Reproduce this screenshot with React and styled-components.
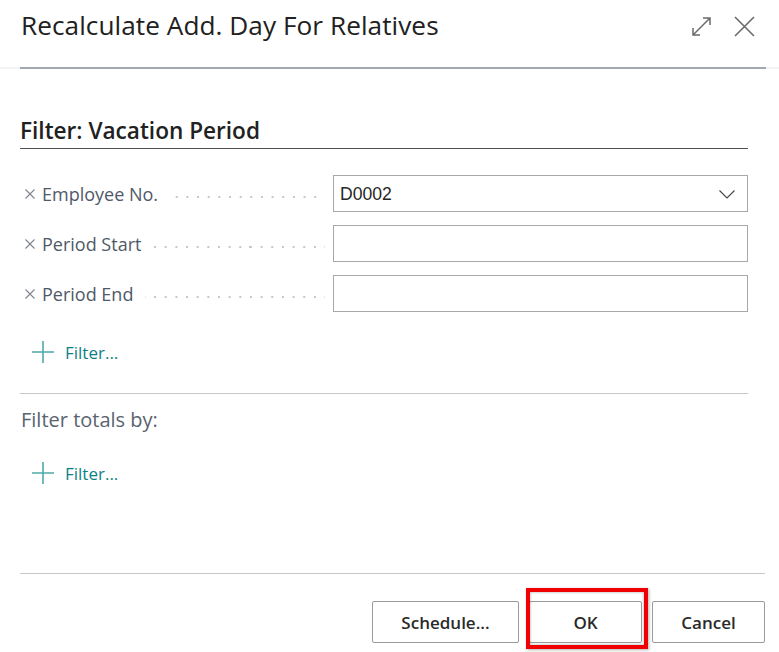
import React from "react";
import styled, { createGlobalStyle } from "styled-components";

const Global = createGlobalStyle`
  html, body { margin: 0; padding: 0; background: #fff; }
  body { font-family: "Open Sans", "Noto Sans", sans-serif; }
  * { box-sizing: border-box; }
`;

const Dialog = styled.div`
  width: 779px;
  height: 652px;
  display: flex;
  flex-direction: column;
  background: #fff;
  overflow: hidden;
`;

const Header = styled.div`
  height: 67px;
  display: flex;
  align-items: center;
  padding: 0 24px 0 21px;
`;

const Title = styled.h1`
  flex: 1;
  margin: 0;
  font-size: 26.2px;
  font-weight: 400;
  letter-spacing: 0.05px;
  color: #212121;
  line-height: 34px;
  margin-top: -17px;
`;

const HeaderIcons = styled.div`
  display: flex;
  align-items: center;
  gap: 22px;
  margin-top: -15px;
`;

const IconButton = styled.span`
  display: inline-flex;
  width: 21px;
  height: 21px;
  color: #6a6a6a;
`;

const RuleStrip = styled.div`
  height: 2px;
  background: #f3f3f4;
  padding: 0 13px 0 20px;
`;

const Rule = styled.div`
  height: 2px;
  background: #a4a8b1;
`;

const Body = styled.div`
  flex: 1;
  padding: 0 31px 0 20px;
  display: flex;
  flex-direction: column;
`;

const SectionTitle = styled.h2`
  margin: 47px 0 0;
  font-size: 22.6px;
  font-weight: 600;
  line-height: 29px;
  color: #212121;
  padding-bottom: 3px;
  border-bottom: 1px solid #505050;
`;

const Fields = styled.div`
  margin-top: 26px;
  display: flex;
  flex-direction: column;
  gap: 13px;
`;

const FieldRow = styled.div`
  display: grid;
  grid-template-columns: 313px 1fr;
  height: 37px;
`;

const Label = styled.div`
  display: flex;
  align-items: center;
  padding-left: 5px;
  padding-right: 8px;
  color: #4f5968;
  font-size: 18px;
`;

const Remove = styled.span`
  display: inline-flex;
  width: 17px;
  color: #7f848c;
  margin-top: 1px;
`;

const LabelText = styled.span`
  white-space: nowrap;
  margin-right: 12px;
`;

const Leader = styled.span`
  flex: 1;
  height: 2px;
  margin-top: 7px;
  background: radial-gradient(circle at 1px 1px, #c6c6c6 0.9px, transparent 1.1px) right center / 10.67px 2px repeat-x;
`;

const Input = styled.div`
  border: 1px solid #a8a8a8;
  display: flex;
  align-items: center;
  padding: 2px 12px 0 6px;
  font-family: "Liberation Sans", Arial, sans-serif;
  font-size: 17.6px;
  color: #262626;
`;

const InputValue = styled.span`
  flex: 1;
`;

const AddFilter = styled.div`
  display: flex;
  align-items: center;
  gap: 11px;
  margin-top: 29px;
  padding-left: 12px;
  height: 22px;
  color: #0e7f86;
  font-size: 17px;
`;

const Separator = styled.div`
  margin-top: 30px;
  height: 1px;
  background: #c6c6cc;
`;

const TotalsLabel = styled.div`
  margin-top: 13px;
  padding-left: 1px;
  font-size: 20px;
  line-height: 26px;
  color: #5a6370;
`;

const Footer = styled.div`
  margin: 0 14px 0 20px;
  border-top: 1px solid #c8c8c8;
  padding: 27px 0 9px;
  display: flex;
  justify-content: flex-end;
  gap: 10px;
`;

const Button = styled.button`
  position: relative;
  width: ${(p) => p.$w}px;
  height: 42px;
  background: #fff;
  border: 1px solid #9a9a9a;
  border-radius: 2px;
  font-family: "Open Sans", sans-serif;
  font-size: 17px;
  font-weight: 600;
  color: #2a2a2a;
  padding: 0;
`;

const Highlight = styled.span`
  position: absolute;
  left: -4px;
  right: -7px;
  top: -14px;
  bottom: -7px;
  border: 4px solid #f00000;
  box-shadow: inset 0 0 3px rgba(0, 0, 0, 0.35), 1px 1px 3px rgba(0, 0, 0, 0.3);
  pointer-events: none;
`;

const PlusIcon = () => (
  <svg width="22" height="22" viewBox="0 0 22 22">
    <path d="M11 0v22M0 11h22" stroke="#4fa9ab" strokeWidth="1.6" fill="none" />
  </svg>
);

const RemoveIcon = () => (
  <svg width="10" height="10" viewBox="0 0 10 10">
    <path d="M0.5 0.5L9.5 9.5M9.5 0.5L0.5 9.5" stroke="currentColor" strokeWidth="1.1" fill="none" />
  </svg>
);

const Chevron = () => (
  <svg width="16" height="9" viewBox="0 0 16 9">
    <path d="M0.5 0.5L8 8L15.5 0.5" stroke="#444" strokeWidth="1.1" fill="none" />
  </svg>
);

const ExpandIcon = () => (
  <svg width="21" height="21" viewBox="0 0 21 21">
    <path d="M2 19L19 2M12 2h7v7M2 12v7h7" stroke="currentColor" strokeWidth="1.5" fill="none" />
  </svg>
);

const CloseIcon = () => (
  <svg width="21" height="21" viewBox="0 0 21 21">
    <path d="M1 1L20 20M20 1L1 20" stroke="currentColor" strokeWidth="1.6" fill="none" />
  </svg>
);

const fields = [
  { label: "Employee No.", value: "D0002", dropdown: true },
  { label: "Period Start", value: "" },
  { label: "Period End", value: "" },
];

export default function App() {
  return (
    <>
      <Global />
      <Dialog>
        <Header>
          <Title>Recalculate Add. Day For Relatives</Title>
          <HeaderIcons>
            <IconButton><ExpandIcon /></IconButton>
            <IconButton><CloseIcon /></IconButton>
          </HeaderIcons>
        </Header>
        <RuleStrip><Rule /></RuleStrip>
        <Body>
          <SectionTitle>Filter: Vacation Period</SectionTitle>
          <Fields>
            {fields.map((f) => (
              <FieldRow key={f.label}>
                <Label>
                  <Remove><RemoveIcon /></Remove>
                  <LabelText>{f.label}</LabelText>
                  <Leader />
                </Label>
                <Input>
                  <InputValue>{f.value}</InputValue>
                  {f.dropdown && <Chevron />}
                </Input>
              </FieldRow>
            ))}
          </Fields>
          <AddFilter><PlusIcon />Filter...</AddFilter>
          <Separator />
          <TotalsLabel>Filter totals by:</TotalsLabel>
          <AddFilter><PlusIcon />Filter...</AddFilter>
        </Body>
        <Footer>
          <Button $w={147}>Schedule...</Button>
          <Button $w={113}>OK<Highlight /></Button>
          <Button $w={113}>Cancel</Button>
        </Footer>
      </Dialog>
    </>
  );
}
